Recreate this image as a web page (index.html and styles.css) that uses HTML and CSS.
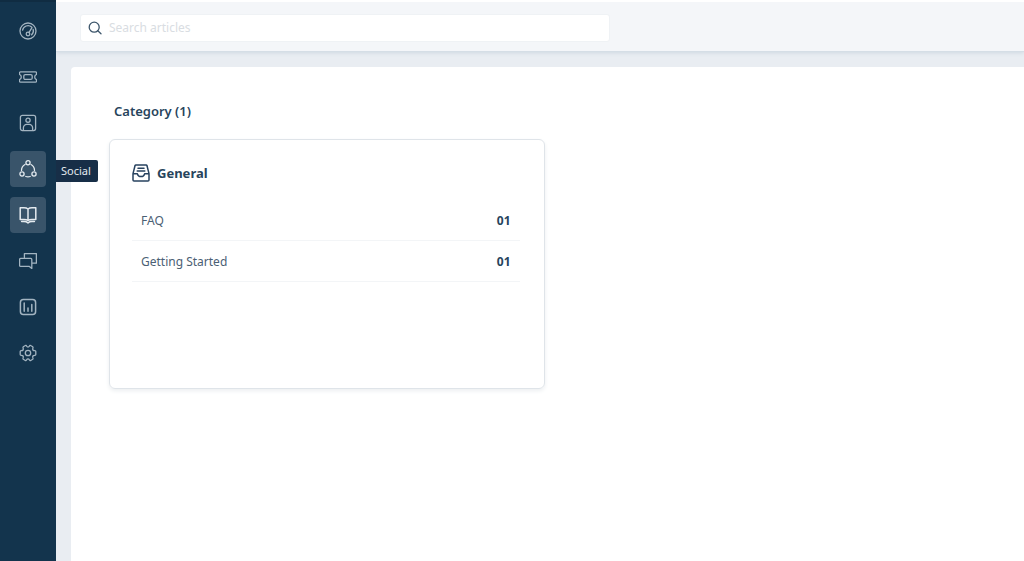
FILE: index.html
```html
<!DOCTYPE html>
<html lang="en">
<head>
<meta charset="utf-8">
<meta name="viewport" content="width=device-width, initial-scale=1">
<title>Knowledge base</title>
<link rel="stylesheet" href="styles.css">
</head>
<body>
<div class="app">
  <nav class="sidebar" aria-label="Main">
    <a class="nav-item" href="#dashboard" aria-label="Dashboard">
      <svg class="icon" viewBox="0 0 18 18"><circle cx="9" cy="9" r="8"/><path d="M3.6 8.2A5.5 5.5 0 0 1 12.6 5M14.2 7.4A5.5 5.5 0 0 1 12.6 12.8M9.9 10.6L13 5.6"/><circle cx="9" cy="12" r="1.8"/></svg>
    </a>
    <a class="nav-item" href="#tickets" aria-label="Tickets">
      <svg class="icon" viewBox="0 0 18 18"><path d="M1.5 3.8h15a1 1 0 0 1 1 1v1.6q-1.8.6-1.8 2.6t1.8 2.6v1.6a1 1 0 0 1-1 1h-15a1 1 0 0 1-1-1v-1.6q1.8-.6 1.8-2.6T.5 6.400v-1.600a1 1 0 0 1 1-1z"/><rect x="4.8" y="6.600" width="8.400" height="4.800" rx="1.500"/></svg>
    </a>
    <a class="nav-item" href="#contacts" aria-label="Contacts">
      <svg class="icon" viewBox="0 0 18 18"><rect x="1.4" y="1.4" width="15.2" height="15.2" rx="2"/><circle cx="9" cy="6.3" r="2.1"/><path d="M4.4 16.4v-2.6a3.4 3.4 0 0 1 3.4-3.4h2.4a3.4 3.4 0 0 1 3.4 3.4v2.6"/></svg>
    </a>
    <a class="nav-item nav-item-active" href="#social" aria-label="Social">
      <svg class="icon" viewBox="0 0 18 18"><circle cx="9" cy="2.8" r="2.1"/><circle cx="3" cy="14" r="2.1"/><circle cx="15" cy="14" r="2.1"/><path d="M6 4.500A6.600 6.600 0 0 0 2.500 10.400M12 4.500a6.600 6.600 0 0 1 3.500 5.900M6.800 16.500a6.600 6.600 0 0 0 4.400 0"/></svg>
      <span class="tooltip">Social</span>
    </a>
    <a class="nav-item nav-item-active" href="#articles" aria-label="Articles" aria-current="page">
      <svg class="icon icon-bold" viewBox="0 0 18 18"><path d="M9 3C7.800 2 6.600 1.800 5 1.800H1.200v11.600H5c1.600 0 2.800.2 4 1.100 1.200-.9 2.400-1.100 4-1.100h3.800V1.800H13c-1.600 0-2.800.2-4 1.200zM9 3v11.500M2.600 15.600H5c1.600 0 2.800.3 4 1.300 1.200-1 2.400-1.300 4-1.300h2.400"/></svg>
    </a>
    <a class="nav-item" href="#chats" aria-label="Chats">
      <svg class="icon" viewBox="0 0 18 18"><path d="M5.4 5.200V1.600h12v9.600h-4.600M1.600 6.400h10.200a1 1 0 0 1 1 1v9l-2.400-2H1.600a1 1 0 0 1-1-1v-6a1 1 0 0 1 1-1z"/></svg>
    </a>
    <a class="nav-item" href="#reports" aria-label="Reports">
      <svg class="icon icon-bold" viewBox="0 0 18 18"><rect x="1.4" y="1.4" width="15.2" height="15.2" rx="3"/><path d="M5.2 5v8.2M9 10v3.2M12.8 6.600v6.600"/></svg>
    </a>
    <a class="nav-item" href="#settings" aria-label="Settings">
      <svg class="icon" viewBox="0 0 18 18"><path d="M6.300 1.500Q7 1 7.400 1.900Q9 4.200 10.600 1.900Q11 1 11.700 1.500L13.700 2.700Q14.300 3.200 13.900 4Q13 6.700 15.800 6.600Q16.800 6.700 16.800 7.500V10.500Q16.800 11.300 15.800 11.400Q13 11.300 13.900 14Q14.300 14.800 13.700 15.300L11.700 16.500Q11 17 10.600 16.100Q9 13.800 7.400 16.100Q7 17 6.300 16.500L4.300 15.300Q3.700 14.800 4.100 14Q5 11.300 2.200 11.400Q1.200 11.300 1.200 10.500V7.500Q1.200 6.700 2.200 6.600Q5 6.700 4.100 4Q3.700 3.200 4.300 2.700z"/><circle cx="9" cy="9" r="2.700"/></svg>
    </a>
  </nav>
  <div class="page">
    <header class="topbar">
      <label class="search">
        <svg class="search-icon" viewBox="0 0 14 14"><circle cx="6.2" cy="6.2" r="5"/><path d="M9.8 9.8l3.2 3"/></svg>
        <input class="search-input" type="text" placeholder="Search articles" aria-label="Search articles">
      </label>
    </header>
    <main class="content">
      <h1 class="heading">Category (1)</h1>
      <div class="categories">
        <section class="card">
          <h2 class="card-title">
            <svg class="card-icon" viewBox="0 0 18 18"><path d="M1 9.600L3 1.800a1 1 0 0 1 1-.8h10a1 1 0 0 1 1 .8L17 9.600M1 9.800h4.400c.4 1.800 1.800 2.800 3.600 2.800s3.200-1 3.600-2.800H17V16a1 1 0 0 1-1 1H2a1 1 0 0 1-1-1zM6 4.200h6M5.200 7h7.600"/></svg>
            General
          </h2>
          <ul class="sections">
            <li><a class="section-row" href="#faq"><span>FAQ</span><strong class="count">01</strong></a></li>
            <li><a class="section-row" href="#getting-started"><span>Getting Started</span><strong class="count">01</strong></a></li>
          </ul>
        </section>
      </div>
    </main>
  </div>
</div>
</body>
</html>
```
FILE: styles.css
```css
* { box-sizing: border-box; }

body {
  margin: 0;
  background: #e9edf2;
  color: #27445c;
  font: 12px/20px "Noto Sans", "Open Sans", sans-serif;
}

a { color: inherit; text-decoration: none; }

.app { display: flex; min-height: 100vh; }

.sidebar {
  position: relative;
  z-index: 1;
  display: flex;
  flex: 0 0 56px;
  flex-direction: column;
  align-items: center;
  gap: 10px;
  padding-top: 11px;
  border-top: 2px solid #102c42;
  background: #13344d;
}

.nav-item {
  position: relative;
  display: flex;
  align-items: center;
  justify-content: center;
  width: 36px;
  height: 36px;
  border-radius: 4px;
  color: #a3b4c1;
}

.nav-item-active { background: #39546a; color: #e4eaef; }

.icon,
.search-icon,
.card-icon {
  fill: none;
  stroke: currentColor;
  stroke-linecap: round;
  stroke-linejoin: round;
}

.icon { width: 18px; height: 18px; stroke-width: 1.3; }

.icon-bold { stroke-width: 1.5; }

.tooltip {
  position: absolute;
  top: 9px;
  left: 46px;
  z-index: 1;
  padding: 0 7px 0 5px;
  border-radius: 0 2px 2px 0;
  background: #172e47;
  color: #e4e9ee;
  font-size: 11px;
  line-height: 22px;
}

.page { display: flex; flex: 1; flex-direction: column; min-width: 0; }

.topbar {
  padding: 12px 24px 9px;
  border-top: 2px solid #fff;
  border-bottom: 1px solid #d5dee6;
  background: #f4f6f9;
  box-shadow: 0 1px 4px #cfd8e1;
}

.search {
  display: flex;
  align-items: center;
  gap: 7px;
  width: 530px;
  max-width: 100%;
  height: 28px;
  padding: 0 7px;
  border: 1px solid #eff2f5;
  border-radius: 3px;
  background: #fff;
}

.search-icon { width: 14px; height: 14px; stroke: #3d566b; stroke-width: 1.3; }

.search-input {
  flex: 1;
  min-width: 0;
  padding: 0;
  border: 0;
  outline: 0;
  background: none;
  color: inherit;
  font: inherit;
}

.search-input::placeholder { color: #d9dde2; opacity: 1; }

.content {
  flex: 1;
  margin: 15px 0 0 15px;
  padding: 34px 38px;
  border-radius: 4px 0 0 0;
  background: #fff;
}

.heading {
  margin: 0 0 18px;
  padding-left: 5px;
  font-size: 13px;
  font-weight: 600;
  line-height: 20px;
}

.categories {
  display: grid;
  grid-template-columns: repeat(2, minmax(0, 1fr));
  gap: 6px;
}

.card {
  min-height: 250px;
  padding: 23px 24px 23px 22px;
  border: 1px solid #dfe4e9;
  border-radius: 6px;
  box-shadow: 0 2px 4px #eceff1;
}

.card-title {
  display: flex;
  align-items: center;
  gap: 7px;
  margin: 0 0 17px;
  font-size: 13px;
  font-weight: 700;
  line-height: 20px;
}

.card-icon { width: 18px; height: 18px; stroke: #27425f; stroke-width: 1.5; }

.sections { margin: 0; padding: 0; list-style: none; }

.section-row {
  display: flex;
  justify-content: space-between;
  padding: 11px 9px 9px;
  border-bottom: 1px solid #f3f5f7;
  color: #4b6074;
}

.count { color: #27445c; font-weight: 700; }
```
